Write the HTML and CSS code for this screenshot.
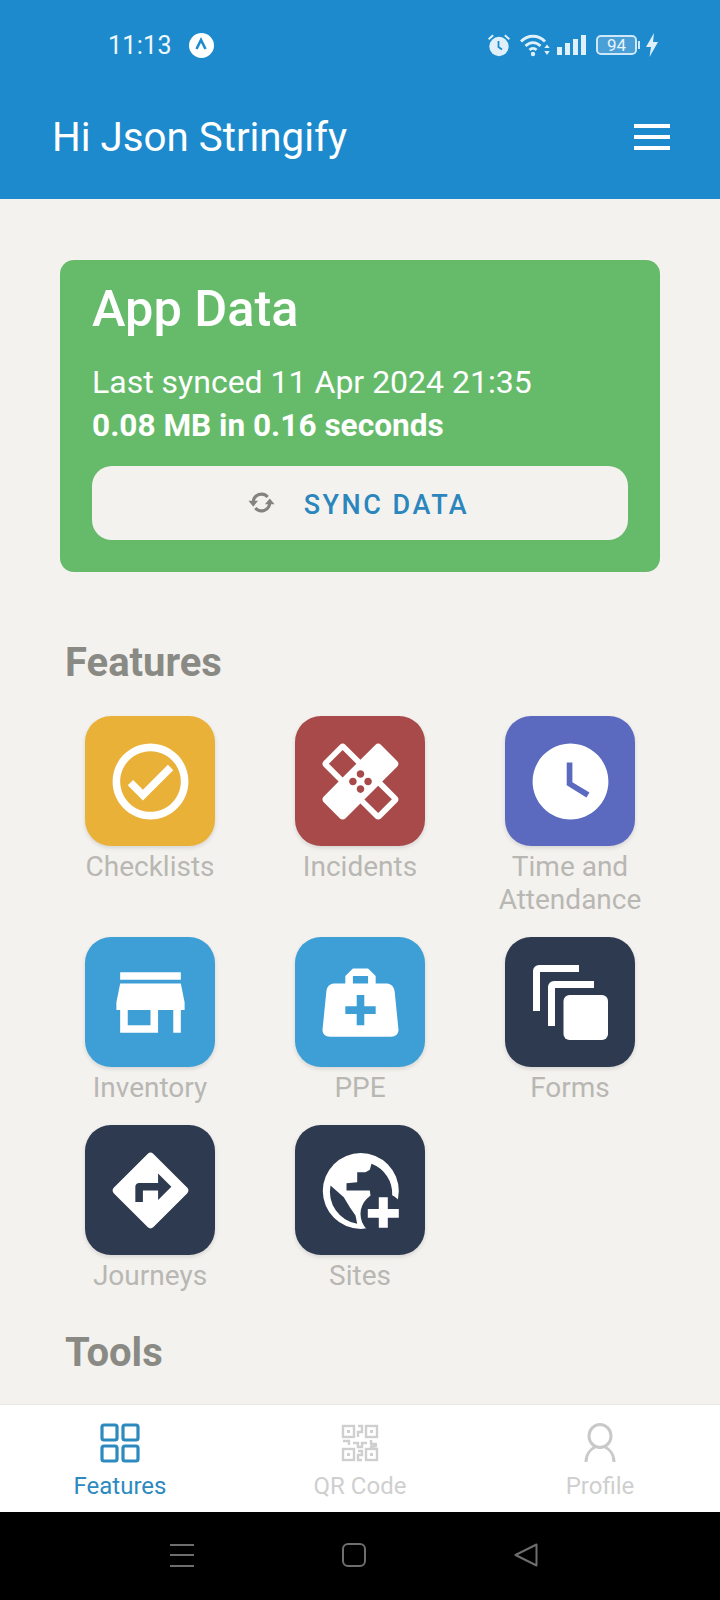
FILE: index.html
```html
<!DOCTYPE html>
<html lang="en">
<head>
	<meta charset="UTF-8">
	<title>Features</title>
	<link rel="stylesheet" href="styles.css">
</head>
<body>
	<header class="top">
		<div class="status">
			<div class="status-left">
				<span class="clock">11:13</span>
				<span class="badge">
					<svg viewBox="0 0 24 24" width="24" height="24"><path d="M7.5 16 L12 7 L16.5 16" fill="none" stroke="#1c8acd" stroke-width="2.6"/></svg>
				</span>
			</div>
			<div class="status-right">
				<svg viewBox="0 0 24 24" width="24" height="24"><path d="M5.5 1.5 L1 5.5 L2.3 7 L6.8 3 Z M18.5 1.5 L23 5.5 L21.7 7 L17.2 3 Z" fill="#dff0fa"/><circle cx="12" cy="13.5" r="9.7" fill="#dff0fa"/><path d="M11.5 8 V14 L15 16.5" fill="none" stroke="#1c8acd" stroke-width="1.8"/></svg>
				<svg class="wifi" viewBox="0 0 30 24" width="30" height="24"><g fill="none" stroke="#dff0fa" stroke-width="2.8"><path d="M1 8.5 C7.5 1.5 18.5 1.5 25 8.5"/><path d="M5.5 13 C10 8.5 16 8.5 20.5 13"/><path d="M9.5 17 C11.5 15 14.5 15 16.5 17"/></g><circle cx="13" cy="21" r="2.2" fill="#dff0fa"/><path d="M27 11.5 L29.7 15 H24.3 Z M27 22 L24.3 18 H29.7 Z" fill="#dff0fa"/></svg>
				<svg class="signal" viewBox="0 0 29 20" width="29" height="20"><g fill="#dff0fa"><rect x="0" y="12" width="5" height="8"/><rect x="8" y="8" width="5" height="12"/><rect x="16" y="4" width="5" height="16"/><rect x="24" y="0" width="5" height="20"/></g></svg>
				<div class="battery">
					<span class="battery-body">94</span>
					<span class="battery-tip"></span>
				</div>
				<svg class="bolt" viewBox="0 0 12 24" width="12" height="24"><path d="M8 0 L0 14 H5 L3.5 24 L12 9 H7 Z" fill="#dff0fa"/></svg>
			</div>
		</div>
		<div class="title-row">
			<h1>Hi Json Stringify</h1>
			<div class="burger"><span></span><span></span><span></span></div>
		</div>
	</header>

	<main class="content">
		<section class="sync-card">
			<h2>App Data</h2>
			<p class="synced">Last synced 11 Apr 2024 21:35</p>
			<p class="size">0.08 MB in 0.16 seconds</p>
			<button class="sync-btn">
				<svg viewBox="0 0 24 24" width="33" height="33"><g fill="none" stroke="#85837f" stroke-width="2.300"><path d="M6 11.500A6 6 0 0 1 16.500 8"/><path d="M18 12.500A6 6 0 0 1 7.500 16"/></g><path fill="#85837f" d="M2.500 10.800H9.500L6 15ZM14.500 13.200H21.500L18 9Z"/></svg>
				<span>SYNC DATA</span>
			</button>
		</section>

		<h3 class="group-title">Features</h3>
		<div class="grid">
			<div class="item">
				<div class="tile yellow"><svg viewBox="0 0 24 24"><path d="M12 2C6.48 2 2 6.48 2 12s4.48 10 10 10 10-4.48 10-10S17.52 2 12 2zm0 18c-4.41 0-8-3.59-8-8s3.59-8 8-8 8 3.59 8 8-3.59 8-8 8zm4.59-12.42L10 14.17l-2.59-2.58L6 13l4 4 8-8z"/></svg></div>
				<span>Checklists</span>
			</div>
			<div class="item">
				<div class="tile red"><svg viewBox="0 0 24 24"><path d="M17.73 12.02l3.98-3.98c.39-.39.39-1.02 0-1.41l-4.34-4.34c-.39-.39-1.02-.39-1.41 0l-3.98 3.98L8 2.29C7.8 2.1 7.55 2 7.29 2c-.25 0-.51.1-.7.29L2.25 6.63c-.39.39-.39 1.02 0 1.41l3.98 3.98L2.25 16c-.39.39-.39 1.02 0 1.41l4.34 4.34c.39.39 1.02.39 1.41 0l3.98-3.98 3.98 3.98c.2.2.45.29.71.29.26 0 .51-.1.71-.29l4.34-4.34c.39-.39.39-1.02 0-1.41l-3.99-3.98zM12 9c.55 0 1 .45 1 1s-.45 1-1 1-1-.45-1-1 .45-1 1-1zm-4.71 1.96L3.66 7.34l3.63-3.63 3.62 3.62-3.62 3.63zM10 13c-.55 0-1-.45-1-1s.45-1 1-1 1 .45 1 1-.45 1-1 1zm2 2c-.55 0-1-.45-1-1s.45-1 1-1 1 .45 1 1-.45 1-1 1zm2-4c.55 0 1 .45 1 1s-.45 1-1 1-1-.45-1-1 .45-1 1-1zm2.66 9.34l-3.63-3.62 3.63-3.63 3.62 3.62-3.62 3.63z"/></svg></div>
				<span>Incidents</span>
			</div>
			<div class="item">
				<div class="tile indigo"><svg viewBox="0 0 24 24"><path d="M12 2C6.5 2 2 6.5 2 12s4.5 10 10 10 10-4.5 10-10S17.5 2 12 2zm4.2 14.2L11 13V7h1.5v5.2l4.5 2.7-.8 1.3z"/></svg></div>
				<span>Time and Attendance</span>
			</div>
			<div class="item">
				<div class="tile blue"><svg viewBox="0 0 24 24"><path d="M20 4H4v2h16V4zm1 10v-2l-1-5H4l-1 5v2h1v6h10v-6h4v6h2v-6h1zm-9 4H6v-4h6v4z"/></svg></div>
				<span>Inventory</span>
			</div>
			<div class="item">
				<div class="tile blue"><svg viewBox="0 0 24 24"><path d="M10,3L8,5V7H5C3.85,7 3.12,8 3,9L2,19C1.88,20 2.54,21 4,21H20C21.46,21 22.12,20 22,19L21,9C20.88,8 20.06,7 19,7H16V5L14,3H10M10,5H14V7H10V5M11,10H13V13H16V15H13V18H11V15H8V13H11V10Z"/></svg></div>
				<span>PPE</span>
			</div>
			<div class="item">
				<div class="tile navy"><svg viewBox="0 0 91 91"><path d="M8 54V14a6 6 0 0 1 6-6H54V15H15V54Z"/><path d="M23 69V30a6 6 0 0 1 6-6H69V31H30V69Z"/><rect x="38.5" y="38" width="44.5" height="45" rx="6"/></svg></div>
				<span>Forms</span>
			</div>
			<div class="item">
				<div class="tile navy"><svg viewBox="0 0 24 24"><path d="M21.71 11.29l-9-9c-.39-.39-1.02-.39-1.41 0l-9 9c-.39.39-.39 1.02 0 1.41l9 9c.39.39 1.02.39 1.41 0l9-9c.39-.38.39-1.01 0-1.41zM14 14.5V12h-4v3H8v-4c0-.55.45-1 1-1h5V7.5l3.5 3.5-3.5 3.5z"/></svg></div>
				<span>Journeys</span>
			</div>
			<div class="item">
				<div class="tile navy"><svg viewBox="0 0 91 91"><circle cx="45.800" cy="46" r="38"/><path class="cut" d="M56.500 18.800L54.800 24.800L50.500 27.200H42.200V37.200L31.500 38.200V45.500H54.800L55.500 50.500L50 57L77 69L77.200 50.500A32 32 0 0 0 56.500 18.800Z"/><path class="cut" d="M15.500 40.500L28.800 52.200L34.800 62.200L40.500 70.500L42.200 78.800A32.500 32.500 0 0 1 15.500 40.500Z"/><circle class="cut" cx="67" cy="69" r="21.500"/><path d="M63.800 52.200H72.800V64H83.800V72.800H72.800V82.800H63.800V72.800H52.800V64H63.800Z"/></svg></div>
				<span>Sites</span>
			</div>
		</div>

		<h3 class="group-title tools">Tools</h3>
	</main>

	<nav class="tabs">
		<div class="tab active">
			<svg viewBox="0 0 40 40" width="40" height="40"><g fill="none" stroke="#2d8abf" stroke-width="3.200"><rect x="2" y="2" width="15" height="15" rx="2"/><rect x="23" y="2" width="15" height="15" rx="2"/><rect x="2" y="23" width="15" height="15" rx="2"/><rect x="23" y="23" width="15" height="15" rx="2"/></g></svg>
			<span>Features</span>
		</div>
		<div class="tab">
			<svg viewBox="0 0 40 40" width="40" height="40"><g fill="none" stroke="#cfcfcf" stroke-width="2.400"><rect x="3" y="3" width="11" height="11"/><rect x="26" y="3" width="11" height="11"/><rect x="3" y="26" width="11" height="11"/><rect x="26" y="26" width="11" height="11"/><path d="M18 3H22V9H18V14M3 18H9V22M13 20H18V24H22V20H27M31 17V21H37M30 24L37 23M18 28H22V32H18V37H22"/></g><g fill="#cfcfcf"><rect x="7" y="7" width="3" height="3"/><rect x="30" y="7" width="3" height="3"/><rect x="7" y="30" width="3" height="3"/><rect x="30" y="30" width="3" height="3"/></g></svg>
			<span>QR Code</span>
		</div>
		<div class="tab">
			<svg viewBox="0 0 32 40" width="32" height="40"><g fill="none" stroke="#c9c9c9" stroke-width="3"><ellipse cx="16" cy="13" rx="11" ry="11.500"/><path d="M2 39C2 31 7 26 11 24M30 39C30 31 25 26 21 24"/></g></svg>
			<span>Profile</span>
		</div>
	</nav>

	<footer class="sysnav">
		<div class="nav-lines"><span></span><span></span><span></span></div>
		<div class="nav-square"></div>
		<svg viewBox="0 0 24 24" width="24" height="24"><path d="M22.500 1.500V22.500L1.500 12Z" fill="none" stroke="#6e6e6e" stroke-width="2" stroke-linejoin="round"/></svg>
	</footer>
</body>
</html>
```

FILE: styles.css
```css
* {
	box-sizing: border-box;
}
html, body {
	margin: 0;
	height: 1600px;
}
body {
	width: 720px;
	display: flex;
	flex-direction: column;
	overflow: hidden;
	font-family: Roboto, "Liberation Sans", sans-serif;
	background-color: #f4f2ef;
}

/* header */
.top {
	height: 199px;
	flex: none;
	background-color: #1c8acd;
	color: #fff;
	display: flex;
	flex-direction: column;
}
.status {
	height: 90px;
	padding: 30px 62px 0 108px;
	display: flex;
	justify-content: space-between;
	align-items: flex-start;
}
.status-left {
	display: flex;
	align-items: center;
	height: 30px;
}
.clock {
	font-size: 25px;
	letter-spacing: 0.3px;
	color: #eef7fc;
}
.badge {
	width: 25px;
	height: 25px;
	margin-left: 17px;
	border-radius: 50%;
	background-color: #fff;
	display: flex;
	align-items: center;
	justify-content: center;
}
.status-right {
	display: flex;
	align-items: center;
	height: 30px;
}
.wifi {
	margin-left: 9px;
}
.signal {
	margin-left: 7px;
}
.battery {
	display: flex;
	align-items: center;
	margin-left: 10px;
}
.battery-body {
	width: 41px;
	height: 20px;
	border: 2px solid #cfe8f7;
	border-radius: 5px;
	background-color: #4a9fd6;
	background-clip: content-box;
	color: #e8f4fb;
	font-size: 17px;
	line-height: 16px;
	text-align: center;
}
.battery-tip {
	width: 2px;
	height: 8px;
	margin-left: 1px;
	background-color: #cfe8f7;
}
.bolt {
	margin-left: 6px;
}
.title-row {
	flex: 1;
	padding: 0 50px 16px 52px;
	display: flex;
	justify-content: space-between;
	align-items: center;
}
.title-row h1 {
	margin: 2px 0 0;
	font-size: 40.300px;
	font-weight: 400;
	line-height: 44px;
}
.burger {
	width: 36px;
	display: flex;
	flex-direction: column;
	gap: 7px;
}
.burger span {
	height: 4px;
	background-color: #fff;
}

/* scroll area */
.content {
	flex: 1;
	min-height: 0;
	overflow: hidden;
	padding-top: 61px;
}
.sync-card {
	margin: 0 60px;
	padding: 19px 32px 32px;
	border-radius: 14px;
	background-color: #66bb6a;
	color: #fff;
}
.sync-card h2 {
	margin: 0 0 22px;
	font-size: 50.500px;
	font-weight: 500;
	line-height: 60px;
}
.synced, .size {
	margin: 0;
	font-size: 32px;
	line-height: 43px;
}
.size {
	font-size: 31.600px;
	font-weight: 700;
}
.sync-btn {
	width: 100%;
	height: 74px;
	margin-top: 19px;
	padding: 0 6px 0 0;
	border: none;
	border-radius: 20px;
	background-color: #f4f2ef;
	display: flex;
	align-items: center;
	justify-content: center;
	gap: 24px;
	font-family: inherit;
	font-size: 27px;
	font-weight: 500;
	letter-spacing: 2.500px;
	color: #2a86bd;
}
.sync-btn svg {
	margin: 0 2px 2px 0;
}
.sync-btn span {
	margin-top: 4px;
}
.group-title {
	margin: 0;
	padding-left: 65px;
	font-size: 40px;
	font-weight: 700;
	line-height: 44px;
	color: #8a8a85;
}
.sync-card + .group-title {
	margin-top: 69px;
}
.tools {
	margin-top: 39px;
}
.grid {
	margin-top: 31px;
	padding: 0 45px;
	display: grid;
	grid-template-columns: repeat(3, 210px);
	row-gap: 21px;
}
.item {
	display: flex;
	flex-direction: column;
	align-items: center;
	text-align: center;
	font-size: 28px;
	line-height: 33px;
	color: #b8b7b3;
}
.item span {
	max-width: 170px;
}
.tile {
	width: 130px;
	height: 130px;
	flex: none;
	margin-bottom: 4px;
	border-radius: 26px;
	box-shadow: 0 2px 4px rgba(0, 0, 0, 0.12);
	display: flex;
	align-items: center;
	justify-content: center;
}
.tile svg {
	width: 91px;
	height: 91px;
	fill: #fff;
}
.tile .cut {
	fill: #2d3a4f;
}
.yellow { background-color: #eab138; }
.red { background-color: #a94a4a; }
.indigo { background-color: #5b6abf; }
.blue { background-color: #3d9fd6; }
.navy { background-color: #2d3a4f; }

/* bottom tabs */
.tabs {
	height: 108px;
	flex: none;
	background-color: #fff;
	border-top: 1px solid #ebe9e6;
	display: grid;
	grid-template-columns: repeat(3, 240px);
}
.tab {
	padding-top: 18px;
	display: flex;
	flex-direction: column;
	align-items: center;
	font-size: 24px;
	line-height: 32px;
	color: #cfcfcf;
}
.tab span {
	margin-top: 7px;
}
.tab.active {
	color: #2d8abf;
}

/* android nav */
.sysnav {
	height: 88px;
	flex: none;
	padding: 0 182px 2px 170px;
	background-color: #000;
	display: flex;
	justify-content: space-between;
	align-items: center;
}
.nav-lines {
	width: 24px;
	height: 23px;
	display: flex;
	flex-direction: column;
	justify-content: space-between;
}
.nav-lines span {
	height: 2px;
	background-color: #6e6e6e;
}
.nav-square {
	width: 24px;
	height: 24px;
	border: 2px solid #6e6e6e;
	border-radius: 6px;
}
```
